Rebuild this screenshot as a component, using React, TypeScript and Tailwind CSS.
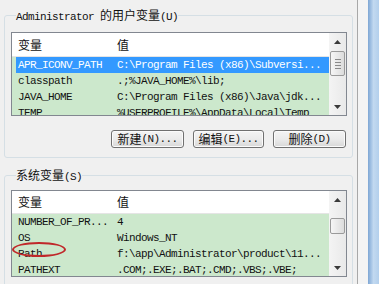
import React from "react";

const mono = "font-['Liberation_Mono','Noto_Sans_CJK_SC',monospace] text-[11px] tracking-[-0.6px]";
const cjk = "font-['Noto_Sans_CJK_SC',sans-serif] text-[12px] tracking-normal";

type Row = { name: string; value: string; selected?: boolean; circled?: boolean };

function Arrow({ up }: { up?: boolean }) {
  return (
    <svg width="7" height="4" viewBox="0 0 7 4">
      {up ? <path d="M0 4 L3.5 0 L7 4 Z" fill="#3a3a3a" /> : <path d="M0 0 L3.5 4 L7 0 Z" fill="#3a3a3a" />}
    </svg>
  );
}

function ScrollBar({ thumbTop, thumbH }: { thumbTop: number; thumbH: number }) {
  return (
    <div className="w-[17px] shrink-0 flex flex-col bg-gradient-to-r from-[#f4f4f4] to-[#e9e9e9]">
      <div className="h-[17px] flex items-center justify-center shrink-0">
        <Arrow up />
      </div>
      <div className="flex-1 relative">
        <div
          className="absolute left-[1px] right-[1px] rounded-[2px] border border-[#9a9a9a] bg-gradient-to-r from-[#f6f6f6] to-[#dcdcdc] flex flex-col items-center justify-center gap-[2px]"
          style={{ top: thumbTop, height: thumbH }}
        >
          {thumbH > 18 && (
            <>
              <div className="w-[6px] h-px bg-[#8a8a8a]" />
              <div className="w-[6px] h-px bg-[#8a8a8a]" />
              <div className="w-[6px] h-px bg-[#8a8a8a]" />
              <div className="w-[6px] h-px bg-[#8a8a8a]" />
            </>
          )}
        </div>
      </div>
      <div className="h-[17px] flex items-center justify-center shrink-0">
        <Arrow />
      </div>
    </div>
  );
}

function List({ rows, height, headerH, thumbTop, thumbH }: { rows: Row[]; height: number; headerH: number; thumbTop: number; thumbH: number }) {
  return (
    <div className="border border-[#828790] flex bg-[#cce8cc] overflow-hidden" style={{ height }}>
      <div className="flex-1 flex flex-col overflow-hidden">
        <div className="bg-white flex items-center pl-[6px] shrink-0 border-b border-[#e5e5e5]" style={{ height: headerH }}>
          <span className={`${cjk} w-[99px] text-[#111]`}>变量</span>
          <span className={`${cjk} text-[#111]`}>值</span>
        </div>
        <div className="flex flex-col pl-[4px] shrink-0">
          {rows.map((r) => (
            <div
              key={r.name}
              className={`h-[16px] shrink-0 flex items-center pl-[2px] whitespace-nowrap ${r.selected ? "bg-[#3399ff] text-white" : "text-[#111]"}`}
            >
              <span className={`${mono} w-[99px] relative`}>
                {r.name}
                {r.circled && (
                  <span className="absolute left-[-6px] top-[-4px] w-[54px] h-[15px] rounded-[50%] border-2 border-[#c0282a]" />
                )}
              </span>
              <span className={mono}>{r.value}</span>
            </div>
          ))}
        </div>
      </div>
      <ScrollBar thumbTop={thumbTop} thumbH={thumbH} />
    </div>
  );
}

function Btn({ zh, key2, dots }: { zh: string; key2: string; dots?: boolean }) {
  return (
    <div className="h-[18px] rounded-[3px] border border-[#707070] bg-gradient-to-b from-[#f4f4f4] via-[#ebebeb] to-[#d8d8d8] flex items-center justify-center text-[#111] shadow-[inset_0_0_0_1px_#fbfbfb]">
      <span className={cjk}>{zh}</span>
      <span className={mono}>({key2}){dots ? "..." : ""}</span>
    </div>
  );
}

function Buttons({ a, b, c }: { a: string; b: string; c: string }) {
  return (
    <div className="flex pl-[100px] gap-[9px]">
      <div className="w-[73px]">
        <Btn zh="新建" key2={a} dots />
      </div>
      <div className="w-[71px]">
        <Btn zh="编辑" key2={b} dots />
      </div>
      <div className="w-[73px]">
        <Btn zh="删除" key2={c} />
      </div>
    </div>
  );
}

export default function App() {
  const userRows: Row[] = [
    { name: "APR_ICONV_PATH", value: "C:\\Program Files (x86)\\Subversi...", selected: true },
    { name: "classpath", value: ".;%JAVA_HOME%\\lib;" },
    { name: "JAVA_HOME", value: "C:\\Program Files (x86)\\Java\\jdk..." },
    { name: "TEMP", value: "%USERPROFILE%\\AppData\\Local\\Temp" },
  ];
  const sysRows: Row[] = [
    { name: "NUMBER_OF_PR...", value: "4" },
    { name: "OS", value: "Windows_NT" },
    { name: "Path", value: "f:\\app\\Administrator\\product\\11...", circled: true },
    { name: "PATHEXT", value: ".COM;.EXE;.BAT;.CMD;.VBS;.VBE;" },
  ];
  return (
    <div className="w-[379px] h-[284px] overflow-hidden flex bg-[#f0f0f0]">
      <div className="w-[357px] shrink-0 flex flex-col pl-[4px]">
        <fieldset className="mt-[7px] w-[349px] border border-[#d5dfe5] rounded-[3px] pl-[6px] pr-[5px] pb-[9px]">
          <legend className="ml-[5px] px-0 leading-[14px] text-[#111] whitespace-nowrap">
            <span className={mono}>Administrator </span>
            <span className={cjk}>的用户变量</span>
            <span className={mono}>(U)</span>
          </legend>
          <div className="mt-[8px]">
            <List rows={userRows} height={84} headerH={24} thumbTop={1} thumbH={25} />
          </div>
          <div className="mt-[14px]">
            <Buttons a="N" b="E" c="D" />
          </div>
        </fieldset>
        <fieldset className="mt-[9px] w-[349px] border border-[#d5dfe5] rounded-[3px] pl-[6px] pr-[5px] pb-[9px]">
          <legend className="ml-[5px] px-0 leading-[14px] text-[#111] whitespace-nowrap">
            <span className={cjk}>系统变量</span>
            <span className={mono}>(S)</span>
          </legend>
          <div className="mt-[6px]">
            <List rows={sysRows} height={87} headerH={23} thumbTop={10} thumbH={16} />
          </div>
          <div className="mt-[11px]">
            <Buttons a="W" b="I" c="L" />
          </div>
        </fieldset>
      </div>
      <div className="w-px bg-[#a8a8a8] shrink-0" />
      <div className="w-[10px] bg-[#f4f4f4] shrink-0" />
      <div className="flex-1 bg-gradient-to-r from-[#7ea6d4] via-[#c2d9f0] to-[#b3cfec]" />
    </div>
  );
}
